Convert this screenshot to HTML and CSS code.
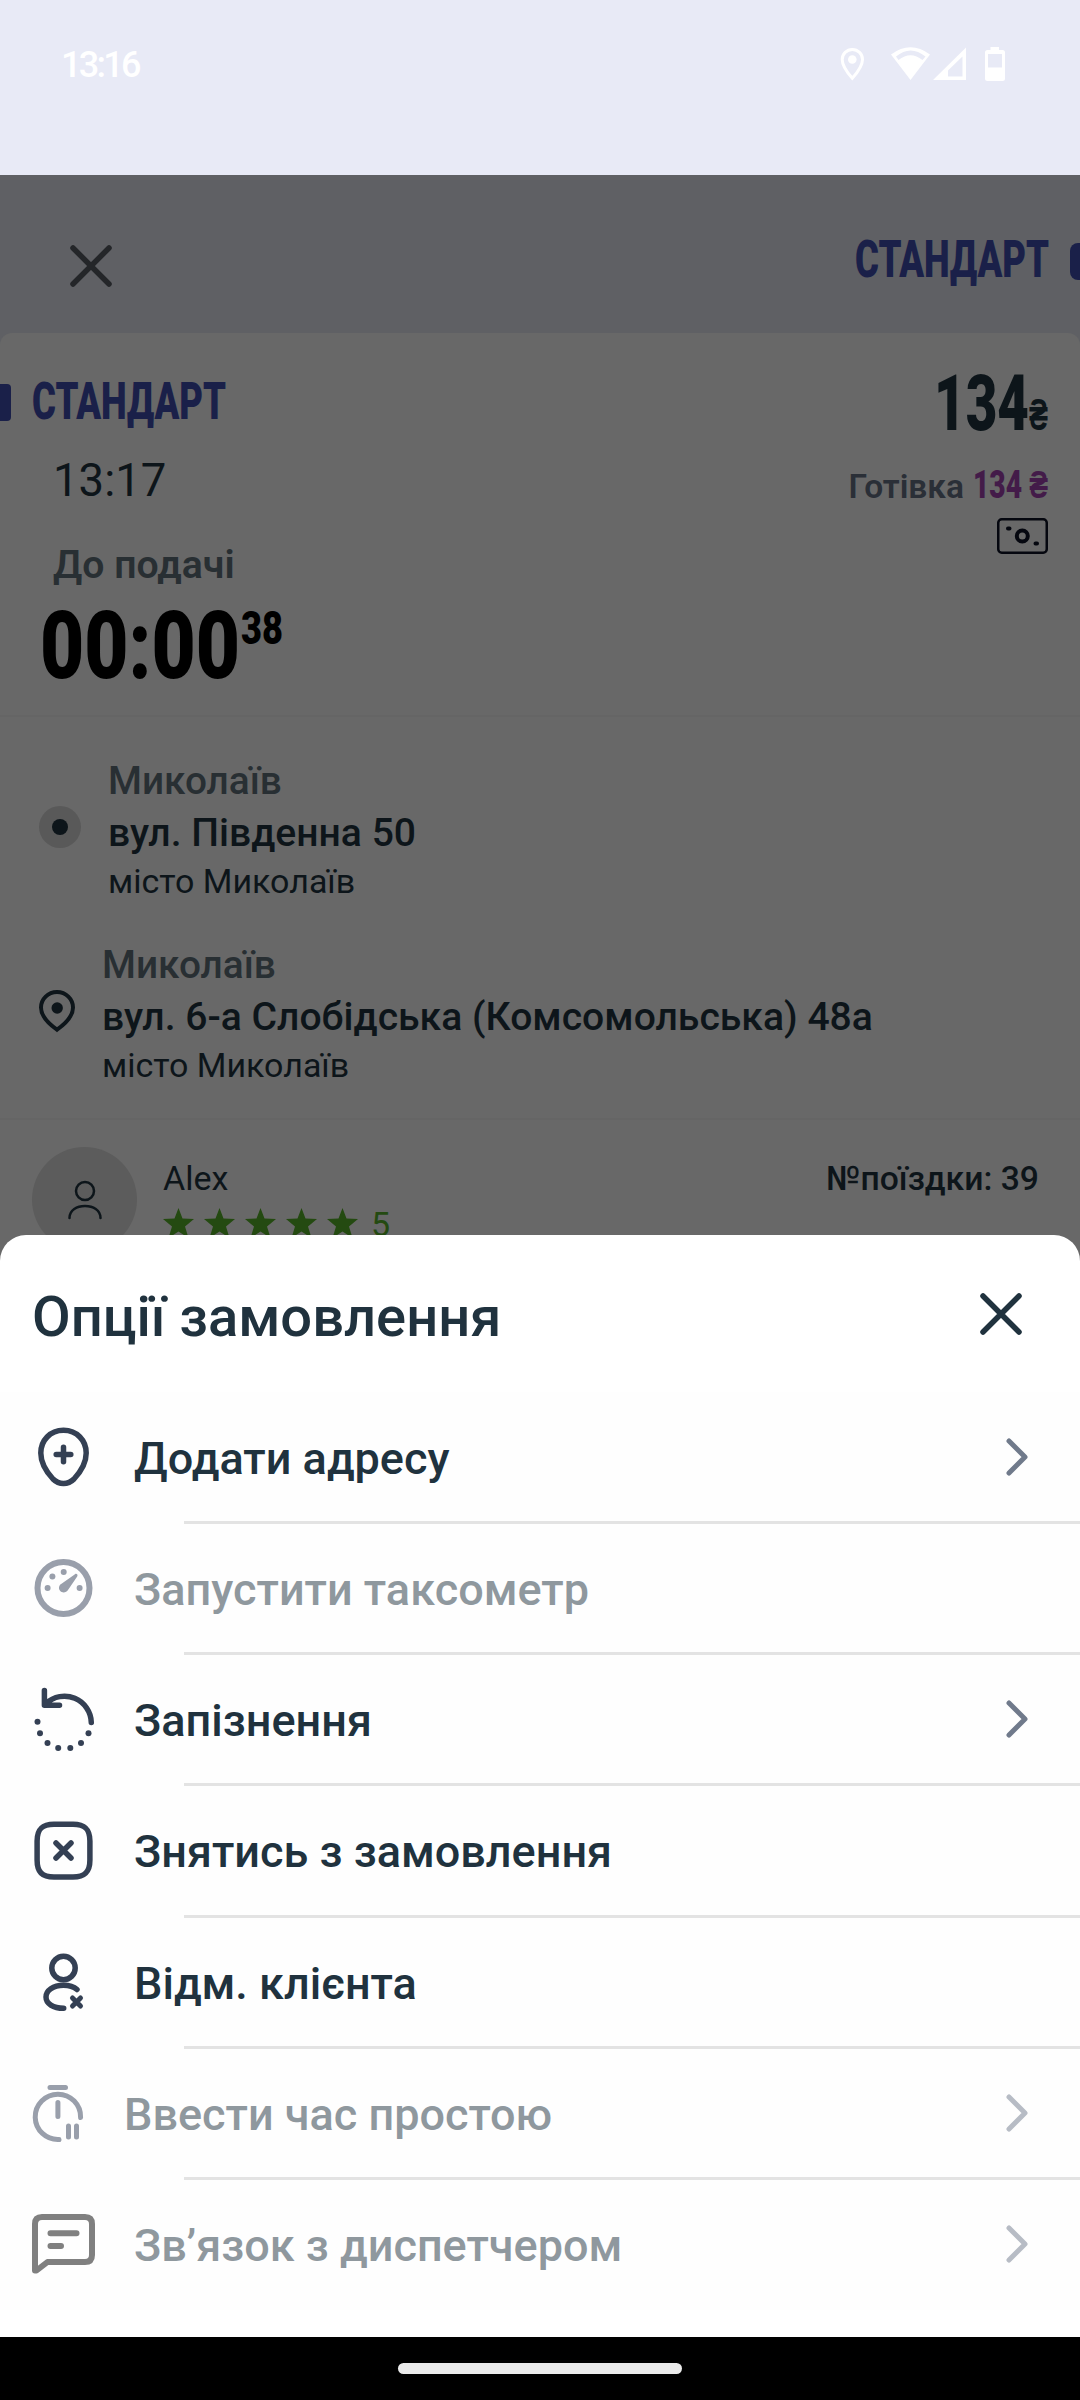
FILE: index.html
```html
<!DOCTYPE html>
<html lang="uk">
<head>
<meta charset="utf-8">
<title>Опції замовлення</title>
<link rel="stylesheet" href="styles.css">
</head>
<body>
<div class="phone">
  <div class="status">
    <span class="clock">13:16</span>
    <svg class="status-icons" width="168" height="40" viewBox="840 44 168 40">
      <path d="M852.300 49.500C858 49.500 862.500 54 862.500 59.500C862.500 65.500 857 73 852.300 78.300C847.600 73 842.200 65.500 842.200 59.500C842.200 54 846.700 49.500 852.300 49.500Z" fill="none" stroke="#fff" stroke-width="3"/>
      <circle cx="852.300" cy="59.500" r="4.300"/>
      <path d="M891 54.500Q910.500 40 930 54.500L910.500 80ZM896 56.500L898.500 60Q910.500 50.500 922.500 60L925.500 56.500Q910.500 44.500 896 56.500Z" fill-rule="evenodd"/>
      <path d="M966 47.500V80H933ZM962.500 56.500L948 70.500V76.500H962.500Z" fill-rule="evenodd"/>
      <path d="M990.500 47H999V50H1002.500Q1005 50 1005 52.500V78.500Q1005 81 1002.500 81H987.500Q985 81 985 78.500V52.500Q985 50 987.500 50H990.500ZM988 54V67.500H1002V54Z" fill-rule="evenodd"/>
    </svg>
  </div>

  <div class="topbar">
    <svg class="close" width="42" height="42" viewBox="0 0 42 42"><path d="M3 3L39 39M39 3L3 39"/></svg>
    <svg class="tag" width="194" height="64"><text x="0" y="49" textLength="194" lengthAdjust="spacingAndGlyphs">СТАНДАРТ</text></svg>
    <i class="marker marker-right"></i>
  </div>

  <div class="card">
    <div class="summary">
      <div class="timing">
        <div class="tag-row">
          <i class="marker marker-left"></i>
          <svg class="tag" width="194" height="64"><text x="0" y="49" textLength="194" lengthAdjust="spacingAndGlyphs">СТАНДАРТ</text></svg>
        </div>
        <div class="time">13:17</div>
        <div class="until">До подачі</div>
        <div class="timer">
          <svg width="200" height="112"><text x="0" y="89" font-size="95" textLength="200" lengthAdjust="spacingAndGlyphs">00:00</text></svg>
          <svg width="42" height="56"><text x="0" y="44" font-size="47" textLength="42" lengthAdjust="spacingAndGlyphs">38</text></svg>
        </div>
      </div>
      <div class="payment">
        <div class="price">
          <svg width="95" height="92"><text x="0" y="73" font-size="78" textLength="95" lengthAdjust="spacingAndGlyphs">134</text></svg>
          <svg width="19" height="56"><text x="0" y="37" font-size="44" textLength="19" lengthAdjust="spacingAndGlyphs">₴</text></svg>
        </div>
        <div class="cash">
          <span>Готівка</span>
          <svg class="cash-sum" width="75" height="46"><text x="0" y="35" font-size="38.500" textLength="75" lengthAdjust="spacingAndGlyphs">134 ₴</text></svg>
        </div>
        <svg class="note" width="51" height="36" viewBox="0 0 51 36">
          <rect x="1.250" y="1.250" width="48.500" height="33.500" rx="3.500" stroke-width="2.500"/>
          <circle cx="25.300" cy="18" r="5.500" stroke-width="4"/>
          <path d="M11 10.500H12.500M38.500 25.500H40" stroke-width="4" stroke-linecap="round"/>
        </svg>
      </div>
    </div>

    <div class="route">
      <div class="stop">
        <svg width="42" height="42" viewBox="0 0 42 42"><circle cx="21" cy="21" r="21" fill="#595959"/><circle cx="21" cy="21" r="8" fill="#0d151a"/></svg>
        <div>
          <div class="city">Миколаїв</div>
          <div class="street">вул. Південна 50</div>
          <div class="place">місто Миколаїв</div>
        </div>
      </div>
      <div class="stop">
        <svg width="36" height="42" viewBox="0 0 36 42">
          <path d="M18 2C9 2 2 9 2 17.500C2 27 10 34 18 39.700C26 34 34 27 34 17.500C34 9 27 2 18 2Z" fill="none" stroke="#0d151a" stroke-width="4"/>
          <circle cx="18.200" cy="18" r="5.700" fill="#0d151a"/>
        </svg>
        <div>
          <div class="city">Миколаїв</div>
          <div class="street">вул. 6-а Слобідська (Комсомольська) 48а</div>
          <div class="place">місто Миколаїв</div>
        </div>
      </div>
    </div>

    <div class="client">
      <svg class="avatar" width="105" height="105" viewBox="0 0 105 105">
        <circle cx="52.500" cy="52.500" r="52.500" fill="#5c5c5c"/>
        <path d="M37.500 71C37.500 63 45 59 53 59S68.500 63 68.500 71" />
        <circle cx="53" cy="44" r="9"/>
      </svg>
      <div>
        <div class="name">Alex</div>
        <div class="rating">
          <svg width="196" height="32" viewBox="0 0 196 32">
            <defs><path id="star" d="M15.500 0L19.500 10.500L31 11L22 18.500L25.500 30L15.500 23.500L5.500 30L9 18.500L0 11L11.500 10.500Z"/></defs>
            <use href="#star"/><use href="#star" x="41"/><use href="#star" x="82"/><use href="#star" x="123"/><use href="#star" x="164"/>
          </svg>
          <span>5</span>
        </div>
      </div>
      <div class="trip">№поїздки: 39</div>
    </div>
  </div>

  <div class="sheet">
    <div class="sheet-head">
      <h1>Опції замовлення</h1>
      <svg class="close" width="42" height="42" viewBox="0 0 42 42"><path d="M3 3L39 39M39 3L3 39"/></svg>
    </div>
    <ul class="options">
      <li>
        <svg class="icon" viewBox="0 0 64 64"><path d="M31.500 5.300C18 5.300 8.800 15.500 8.800 28C8.800 37.500 15 47.500 21 54C27 60 36 60 42 54C48 47.500 54.200 37.500 54.200 28C54.200 15.500 45 5.300 31.500 5.300Z"/><path d="M31.500 22.200V36.800M24.200 29.500H38.800"/></svg>
        <span>Додати адресу</span>
        <svg class="chevron" viewBox="0 0 22 38"><path d="M3 3L19 19L3 35"/></svg>
      </li>
      <li class="disabled">
        <svg class="icon" viewBox="0 0 64 64"><circle cx="31.500" cy="32" r="26" stroke-width="6"/><g class="solid"><circle cx="15.600" cy="32" r="3"/><circle cx="20.400" cy="20.500" r="3"/><circle cx="31.700" cy="16" r="3"/><circle cx="47.600" cy="32" r="3"/><path d="M43 18.200C44.500 17.100 46.300 18.800 45.200 20.500L36 34C34.500 36.500 30.500 37.500 28.300 35C26 32.500 27 29.200 29.500 27.800Z"/></g></svg>
        <span>Запустити таксометр</span>
      </li>
      <li>
        <svg class="icon" viewBox="0 0 64 64"><path d="M12.400 3.500V18.300H27.500M14 16.500A26.900 26.900 0 0 1 59.300 35.500"/><g class="solid"><circle cx="5.500" cy="34.700" r="3"/><circle cx="8" cy="46.300" r="3"/><circle cx="15.500" cy="56" r="3"/><circle cx="26.200" cy="61" r="3"/><circle cx="38.300" cy="61" r="3"/><circle cx="49" cy="56" r="3"/><circle cx="56.500" cy="46.300" r="3"/></g></svg>
        <span>Запізнення</span>
        <svg class="chevron" viewBox="0 0 22 38"><path d="M3 3L19 19L3 35"/></svg>
      </li>
      <li>
        <svg class="icon" viewBox="0 0 64 64"><path d="M22 6.200H41C53 6.200 57.900 11 57.900 23V42C57.900 54 53 59 41 59H22C10 59 5.100 54 5.100 42V23C5.100 11 10 6.200 22 6.200Z"/><path d="M24 25L39 40M39 25L24 40"/></svg>
        <span>Знятись з замовлення</span>
      </li>
      <li>
        <svg class="icon" viewBox="0 0 64 64"><circle cx="31.500" cy="18" r="11.700"/><path d="M45 39.500C41 36 36 35.300 31.500 35.300C21 35.300 14 40.500 14 47S21 58.300 31.700 58.300"/><path d="M40.500 48L48.500 56M48.500 48L40.500 56" stroke-width="5"/></svg>
        <span>Відм. клієнта</span>
      </li>
      <li class="disabled narrow">
        <svg class="icon" viewBox="0 0 64 64"><path d="M18 6.500H33.500M48.600 36.500A22.700 22.700 0 1 0 27 58.500M25.900 21.500V35.500M36.500 45V56M44.500 45V56"/></svg>
        <span>Ввести час простою</span>
        <svg class="chevron" viewBox="0 0 22 38"><path d="M3 3L19 19L3 35"/></svg>
      </li>
      <li class="disabled chat">
        <svg class="icon" viewBox="0 0 64 64"><path d="M3 58.500V12Q3 5 10 5H53Q60 5 60 12V43Q60 50 53 50H15.500L4.500 58.500ZM18.500 21.200H44.500M18.500 34H29"/></svg>
        <span>Зв’язок з диспетчером</span>
        <svg class="chevron" viewBox="0 0 22 38"><path d="M3 3L19 19L3 35"/></svg>
      </li>
    </ul>
  </div>
  <div class="navbar"><i></i></div>
</div>
</body>
</html>
```
FILE: styles.css
```css
* { box-sizing: border-box; }
body { margin: 0; font-family: Roboto, "Liberation Sans", sans-serif; background: #000; }
svg { display: block; flex: none; overflow: visible; }
.phone { width: 1080px; height: 2400px; overflow: hidden; display: flex; flex-direction: column; background: #5f6064; }

.status { flex: none; height: 175px; padding: 44px 72px 0 61px; display: flex; justify-content: space-between; align-items: flex-start; background: #e8eaf6; color: #fff; }
.clock { font-size: 36px; line-height: 42px; font-weight: 500; letter-spacing: -2.7px; }
.status-icons { fill: #fff; }

.topbar { flex: none; height: 158px; padding-left: 70px; display: flex; align-items: flex-start; color: #242629; }
.topbar .close { margin-top: 70px; }
.topbar .tag { margin: 53px 21px 0 auto; }
.close { fill: none; stroke: currentColor; stroke-width: 5.5; stroke-linecap: round; }
.tag text { font-size: 52px; }
.tag text, .timer text, .price text, .cash-sum text { font-family: Roboto, sans-serif; font-weight: 900; }
.tag { fill: #1a2049; }
.marker { flex: none; width: 11px; height: 37px; background: #1a2049; }
.marker-left { border-radius: 0 4px 4px 0; }
.marker-right { width: 10px; margin-top: 68px; border-radius: 8px 0 0 8px; }

.card { flex: none; height: 932px; overflow: hidden; border-radius: 12px 12px 0 0; background: #686868; color: #0d151a; }
.summary { height: 384px; padding-right: 32px; display: flex; justify-content: space-between; border-bottom: 2px solid #656565; }
.timing { padding-top: 37px; }
.tag-row { display: flex; align-items: center; gap: 21px; }
.time { margin: 17px 0 0 53px; font-size: 45.500px; line-height: 60px; font-weight: 450; }
.until { margin: 29px 0 0 53px; font-size: 39.200px; line-height: 50px; font-weight: 600; color: #282f33; }
.timer { margin: -1px 0 0 40px; display: flex; gap: 1px; fill: #000; }
.timer svg:last-child { margin-top: 11px; }
.payment { padding-top: 24px; display: flex; flex-direction: column; align-items: flex-end; }
.price { height: 92px; display: flex; align-items: flex-end; fill: #0d151a; }
.cash { height: 46px; margin-top: 14px; display: flex; align-items: center; gap: 9px; font-size: 33.500px; line-height: 40px; font-weight: 600; color: #2a2f37; }
.cash span { margin-top: 2px; }
.cash-sum { fill: #431b49; }
.note { margin-top: 9px; fill: none; stroke: #05070f; }

.route { height: 403px; padding: 37px 0 0 39px; display: flex; flex-direction: column; gap: 32px; border-bottom: 2px solid #656565; }
.stop { display: flex; align-items: center; gap: 27px; }
.stop svg { margin-top: -6px; }
.city, .street { font-size: 39.100px; line-height: 53px; font-weight: 500; }
.city { font-size: 38.800px; color: #282f33; }
.place { height: 46px; font-size: 34px; line-height: 42px; }

.client { padding: 27px 41px 0 32px; display: flex; align-items: flex-start; font-size: 34px; line-height: 44px; }
.avatar { fill: none; stroke: #0d151a; stroke-width: 2.5; stroke-linecap: round; margin-right: 26px; }
.avatar circle:first-child { stroke: none; }
.name { margin-top: 9px; }
.rating { display: flex; gap: 12px; color: #244a11; }
.rating svg { fill: #244a11; margin-top: 8px; }
.rating span { line-height: 48px; }
.trip { margin: 10px 0 0 auto; font-size: 33.700px; font-weight: 500; }

.sheet { flex: none; height: 1102px; margin-top: -30px; position: relative; border-radius: 26px 26px 0 0; background: #fff; color: #20323e; }
.sheet-head { height: 157px; padding: 0 58px 0 32px; display: flex; justify-content: space-between; align-items: center; }
.sheet-head h1 { margin: 6px 0 0; font-size: 56.100px; line-height: 66px; font-weight: 500; }
.sheet-head .close { margin-top: 1px; }
.options { margin: 0; padding: 0; list-style: none; background: #fefefe; }
.options li { position: relative; height: 131.15px; padding: 0 52px 0 32px; display: flex; align-items: center; font-size: 45px; line-height: 60px; font-weight: 500; }
.options li:not(:last-child)::after { content: ""; position: absolute; left: 184px; right: 0; bottom: -1px; height: 3px; background: #e3e3e3; }
.options span { margin: 3px 0 0 38px; }
.icon { width: 64px; height: 64px; margin-top: -1px; fill: none; stroke: #344054; stroke-width: 5.5; stroke-linecap: round; stroke-linejoin: round; }
.icon .solid { fill: #344054; stroke: none; }
.chevron { width: 22px; height: 38px; margin: -1px 0 0 auto; fill: none; stroke: #707a8b; stroke-width: 5; stroke-linecap: round; stroke-linejoin: round; }
.disabled { color: #8f989e; }
.disabled .icon { stroke: #999fab; }
.disabled .icon .solid { fill: #999fab; }
.disabled .chevron { stroke: #b7bcc5; }
.narrow .icon { stroke-width: 5; }
.narrow span { margin-left: 28px; }
.disabled.chat .icon { stroke: #808080; stroke-width: 6; }

.navbar { flex: 1; display: flex; align-items: center; justify-content: center; background: #000; }
.navbar i { width: 284px; height: 11px; border-radius: 6px; background: #ebebeb; }
```
